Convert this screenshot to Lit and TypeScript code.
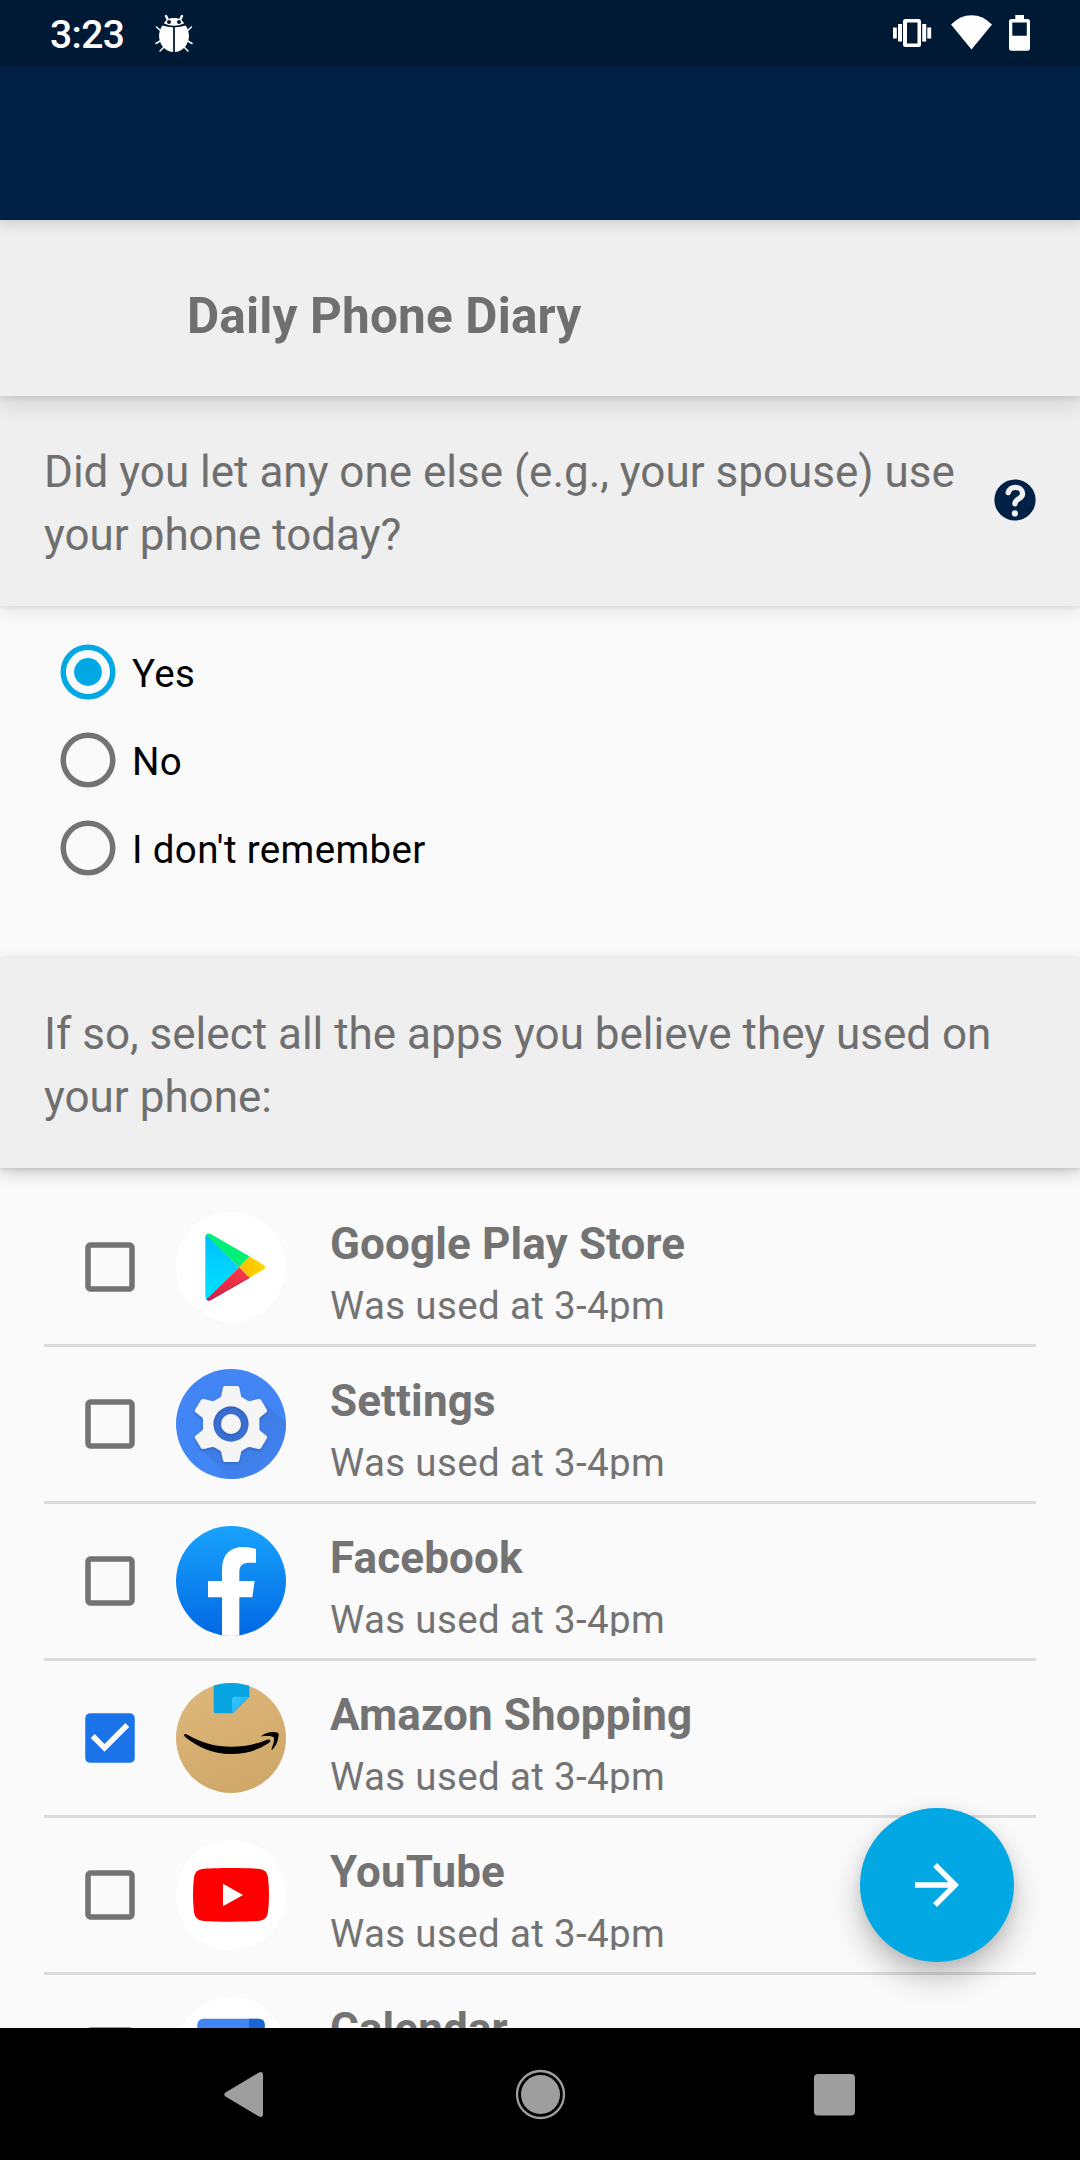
import { LitElement, html, css, svg, nothing, type TemplateResult } from "lit";
import { customElement, property } from "lit/decorators.js";
import { classMap } from "lit/directives/class-map.js";

interface AppEntry {
  name: string;
  usage: string;
  icon: string;
  checked: boolean;
}

const USED = "Was used at 3-4pm";

const APPS: AppEntry[] = [
  { name: "Google Play Store", usage: USED, icon: "play", checked: false },
  { name: "Settings", usage: USED, icon: "settings", checked: false },
  { name: "Facebook", usage: USED, icon: "facebook", checked: false },
  { name: "Amazon Shopping", usage: USED, icon: "amazon", checked: true },
  { name: "YouTube", usage: USED, icon: "youtube", checked: false },
  { name: "Calendar", usage: USED, icon: "calendar", checked: false },
];

const CHOICES = [
  { label: "Yes", selected: true },
  { label: "No", selected: false },
  { label: "I don't remember", selected: false },
];

/* Launcher icons share a 330-unit canvas clipped to a circle. */
const ICONS: Record<string, TemplateResult> = {
  play: svg`
    <defs>
      <linearGradient id="pb" x1="0" y1="0" x2="0" y2="1"><stop offset="0" stop-color="#00c0ff"/><stop offset="1" stop-color="#00e4ff"/></linearGradient>
      <linearGradient id="pr" x1="1" y1="0" x2="0" y2="1"><stop offset="0" stop-color="#ff3a44"/><stop offset="1" stop-color="#d0204e"/></linearGradient>
      <linearGradient id="py" x1="0" y1="0" x2="1" y2="0"><stop offset="0" stop-color="#ffbd00"/><stop offset="1" stop-color="#ffd900"/></linearGradient>
    </defs>
    <rect width="330" height="330" fill="#fff"/>
    <path d="M92 67L190 166L92 262Q88 260 88 255V74Q88 69 92 67Z" fill="url(#pb)"/>
    <path d="M91 68Q95 62 104 66L220 133L190 166Z" fill="#00f076"/>
    <path d="M220 133L262 158Q273 166 262 173L220 197L190 166Z" fill="url(#py)"/>
    <path d="M190 166L220 197L104 264Q95 268 91 262Z" fill="url(#pr)"/>
    <path d="M220 195L104 262Q95 266 90 261Q95 269 104 265L220 198Z" fill="#b81f40"/>`,
  settings: svg`
    <defs>
      <linearGradient id="sl" x1="0" y1="0" x2="1" y2="1"><stop offset="0.4" stop-color="#3d78de"/><stop offset="1" stop-color="#4285f4"/></linearGradient>
      <filter id="sf" x="-20%" y="-20%" width="140%" height="140%"><feDropShadow dx="0" dy="4" stdDeviation="5" flood-color="#1d479c" flood-opacity="0.45"/></filter>
    </defs>
    <rect width="330" height="330" fill="#4285f4"/>
    <path d="M273 108L340 170V340H176L60 225Z" fill="url(#sl)" opacity="0.7"/>
    <circle cx="165" cy="165" r="60" fill="#3a6fd0"/>
    <g filter="url(#sf)">
      <path fill="#f5f5f5" fill-rule="evenodd" d="M146 51H184Q189 51 190 56L195 80Q196 84 200 86L215 95Q219 97 223 96L247 90Q252 89 255 93L273 123Q275 127 271 130L253 144Q250 147 250 151V179Q250 183 253 186L271 200Q275 203 273 207L255 237Q252 241 247 240L223 234Q219 233 215 235L200 244Q196 246 195 250L190 274Q189 279 184 279H146Q142 279 141 274L136 250Q135 246 131 244L115 235Q111 233 107 234L83 240Q78 241 75 237L57 207Q55 203 59 200L77 186Q81 183 81 179V151Q81 147 77 144L59 130Q55 127 57 123L75 93Q78 89 83 90L107 96Q111 97 115 95L131 86Q135 84 136 80L141 56Q142 51 146 51ZM165 112A53 53 0 1 0 165 218A53 53 0 1 0 165 112Z"/>
      <circle cx="165" cy="165" r="30" fill="#f5f5f5"/>
    </g>`,
  facebook: svg`
    <defs><linearGradient id="fb" x1="0" y1="0" x2="0" y2="1"><stop offset="0" stop-color="#18a3fc"/><stop offset="1" stop-color="#0268e4"/></linearGradient></defs>
    <rect width="330" height="330" fill="url(#fb)"/>
    <path fill="#fff" d="M138 330V214H96V165H138V130C138 86 162 63 202 63Q220 63 240 69V110H220C200 110 190 119 190 138V165H236L229 214H190V330Z"/>`,
  amazon: svg`
    <defs>
      <linearGradient id="am" x1="0" y1="0" x2="0.4" y2="1"><stop offset="0" stop-color="#dfb87c"/><stop offset="1" stop-color="#d0a869"/></linearGradient>
      <linearGradient id="at" x1="0" y1="0" x2="1" y2="1"><stop offset="0" stop-color="#38c6ff"/><stop offset="0.6" stop-color="#26b6ee"/></linearGradient>
    </defs>
    <rect width="330" height="330" fill="url(#am)"/>
    <path d="M113 0H220V41L171 91H121Q113 91 113 83Z" fill="#06a5e1"/>
    <path d="M176 41H220L171 91Q168 91 168 87V49Q168 41 176 41Z" fill="url(#at)"/>
    <path d="M24 156Q26 151 34 155C80 180 120 191 165 191C205 191 240 184 273 170Q281 168 283 173Q283 177 277 181C246 202 207 213 165 213C110 213 64 192 27 161Q24 158 24 156Z"/>
    <path d="M256 159C270 147 292 145 305 149Q309 151 308 157C306 176 300 190 289 200Q285 201 287 196C292 184 296 170 293 163C287 158 270 158 258 160Q255 161 256 159Z"/>`,
  youtube: svg`
    <rect width="330" height="330" fill="#fff"/>
    <path fill="#f00" d="M165 84C205 84 235 85 252 87Q273 90 276 112C280 147 280 182 276 217Q273 239 252 242C235 244 205 245 165 245C125 245 95 244 78 242Q57 239 54 217C50 182 50 147 54 112Q57 90 78 87C95 85 125 84 165 84Z"/>
    <path fill="#fff" d="M141 131L201 165L141 199Z"/>`,
  calendar: svg`
    <rect width="330" height="330" fill="#fff"/>
    <rect x="64" y="65" width="202" height="200" rx="18" fill="#4285f4"/>
    <path d="M219 65H248Q266 65 266 83V120H219Z" fill="#1967d2"/>
    <rect x="110" y="112" width="109" height="109" fill="#fff"/>`,
};

@customElement("app-row")
class AppRow extends LitElement {
  static styles = css`
    :host { display: block; }
    .row {
      display: flex; align-items: flex-start;
      height: 110px; padding: 22px 0 22px 33px;
      border-bottom: 3px solid #dcdcdc;
    }
    .check { width: 66px; height: 66px; flex: none; margin-top: 22px; fill: #737373; }
    .check.on { fill: #1a73e8; }
    .icon { width: 110px; height: 110px; flex: none; margin-left: 33px; border-radius: 50%; overflow: hidden; display: block; }
    .text { flex: 1; height: 110px; margin-left: 44px; overflow: hidden; color: #737373; white-space: nowrap; }
    .name { font-size: 44px; line-height: 52px; font-weight: 700; padding-top: 6px; letter-spacing: 0.12px; }
    .usage { font-size: 38.5px; line-height: 46px; padding-top: 13px; letter-spacing: 0.36px; }
  `;

  @property({ attribute: false }) entry!: AppEntry;

  render() {
    const { name, usage, icon, checked } = this.entry;
    return html`<div class="row">
      <svg class=${classMap({ check: true, on: checked })} viewBox="0 0 24 24">
        ${checked
          ? svg`<path d="M5 3H19Q21 3 21 5V19Q21 21 19 21H5Q3 21 3 19V5Q3 3 5 3ZM10 17L19 8L17.59 6.58L10 14.17L6.41 10.59L5 12Z" fill-rule="evenodd"/>`
          : svg`<path d="M19 5v14H5V5h14m0-2H5c-1.1 0-2 .9-2 2v14c0 1.1.9 2 2 2h14c1.1 0 2-.9 2-2V5c0-1.1-.9-2-2-2z"/>`}
      </svg>
      <svg class="icon" viewBox="0 0 330 330">${ICONS[icon]}</svg>
      <div class="text">
        <div class="name">${name}</div>
        <div class="usage">${usage}</div>
      </div>
    </div>`;
  }
}

@customElement("app-root")
class AppRoot extends LitElement {
  static styles = css`
    :host {
      display: flex; flex-direction: column; position: relative;
      width: 1080px; height: 2160px; overflow: hidden;
      background: #fafafa; font-family: Roboto, "Liberation Sans", sans-serif;
    }
    .status {
      flex: none; height: 66px; box-sizing: border-box; background: #001a35; color: #fff;
      display: flex; align-items: center; padding: 0 48px 0 50px;
    }
    .time { font-size: 39px; font-weight: 500; line-height: 66px; padding-top: 3px; width: 104px; letter-spacing: -0.6px; }
    .bug { width: 40px; height: 66px; }
    .sys { width: 144px; height: 66px; margin-left: auto; }
    .toolbar { flex: none; height: 154px; background: #002045; position: relative; z-index: 4; box-shadow: 0 3px 14px rgba(0,0,0,0.16); }
    .title {
      flex: none; height: 176px; box-sizing: border-box; padding: 66px 0 0 187px;
      background: #efefef; color: #6f6f6f; position: relative; z-index: 3;
      font-size: 49.5px; line-height: 60px; font-weight: 700; letter-spacing: 0.16px;
      box-shadow: 0 8px 22px rgba(0,0,0,0.13), 0 2px 6px rgba(0,0,0,0.09);
    }
    .question {
      flex: none; height: 210px; box-sizing: border-box; padding: 45px 44px 0;
      background: #efefef; color: #6f6f6f; position: relative; z-index: 2;
      display: flex; justify-content: space-between;
      font-size: 44px; line-height: 63px;
      box-shadow: 0 4px 16px rgba(0,0,0,0.11), 0 1px 4px rgba(0,0,0,0.08);
    }
    .question.second { box-shadow: 0 5px 16px rgba(0,0,0,0.18), 0 2px 5px rgba(0,0,0,0.1); }
    .question p { margin: 0; white-space: pre-line; }
    .help { width: 42px; height: 42px; flex: none; margin-top: 38px; }
    .choices { flex: none; height: 352px; box-sizing: border-box; padding: 22px 0 0 55px; }
    .choice { display: flex; align-items: center; height: 88px; gap: 11px; font-size: 38.5px; letter-spacing: 0.36px; color: #000; }
    .choice span { padding-top: 3px; }
    .radio { width: 66px; height: 66px; fill: none; stroke: #737373; stroke-width: 5.5; }
    .radio.on { stroke: #02a8e3; }
    .dot { fill: #02a8e3; stroke: none; }
    .list { flex: 1; min-height: 0; overflow: hidden; padding: 22px 44px 0; }
    .nav { flex: none; height: 132px; background: #000; position: relative; z-index: 5; }
    .nav svg { display: block; width: 1080px; height: 132px; fill: #9e9e9e; }
    .fab {
      position: absolute; right: 66px; bottom: 198px; width: 154px; height: 154px; border-radius: 50%;
      background: #02a8e3; display: flex; align-items: center; justify-content: center;
      box-shadow: 0 16px 30px rgba(0,0,0,0.24), 0 2px 12px rgba(0,0,0,0.08);
    }
    .fab svg { width: 66px; height: 66px; fill: #fff; }
  `;

  render() {
    return html`
      <div class="status">
        <div class="time">3:23</div>
        <svg class="bug" viewBox="154 0 40 66">
          <g stroke="#fff" stroke-width="1.5" fill="none" stroke-linecap="round">
            <path d="M156.5 27L161 31M156 43.5L161 40.5M160 51L164 47M191.5 27L187 31M192 43.5L187 40.5M188 51L184 47"/>
            <path d="M166 16L168 20M182 16L180 20" stroke-width="2.4"/>
          </g>
          <path fill="#fff" d="M164 23.5C166 16 182 16 184 23.5Q174 28 164 23.5Z"/>
          <path fill="#fff" d="M162.500 25.500Q168 27.500 173.100 27.300V52C164 51.500 159 43 159 35.500Q159.500 29 162.500 25.500ZM185.500 25.500Q180 27.500 174.900 27.300V52C184 51.500 189 43 189 35.500Q188.500 29 185.500 25.500Z"/>
          <circle cx="169" cy="22" r="2" fill="#001a35"/><circle cx="179" cy="22" r="2" fill="#001a35"/>
        </svg>
        <svg class="sys" viewBox="888 0 144 66" fill="#fff">
          <path fill-rule="evenodd" d="M905.500 19H918.500Q921 19 921 21.500V44.500Q921 47 918.500 47H905.500Q903 47 903 44.500V21.500Q903 19 905.500 19ZM907 22.500V43.500H917.500V22.500Z"/>
          <path d="M898 24H902V41.500H898ZM893 27.500H896.800V38.500H893ZM922.200 24H926.200V41.500H922.200ZM927.300 27.500H931.200V38.500H927.300Z"/>
          <path d="M951 24.500Q960 15.200 971.500 15.200T992 24.500L971.500 49.500Z"/>
          <path fill-rule="evenodd" d="M1015.300 15H1024V19H1027.500Q1030 19 1030 21.500V48.500Q1030 50.800 1027.500 50.800H1011.500Q1009 50.800 1009 48.500V21.500Q1009 19 1011.500 19H1015.300ZM1012.300 22.500V35.800H1026.800V22.500Z"/>
        </svg>
      </div>
      <div class="toolbar"></div>
      <div class="title">Daily Phone Diary</div>
      <div class="question">
        <p>${"Did you let any one else (e.g., your spouse) use\nyour phone today?"}</p>
        <svg class="help" viewBox="0 0 42 42">
          <circle cx="21" cy="21" r="20.600" fill="#002045"/>
          <path d="M14.200 13.600C15.500 9.500 18 8.300 21.300 8.300C25.800 8.300 28.600 11 28.600 14.800C28.600 20.200 21.200 19.400 20.900 24.800" fill="none" stroke="#efefef" stroke-width="5.300" stroke-linecap="round"/>
          <circle cx="20.900" cy="34.400" r="3.100" fill="#efefef"/>
        </svg>
      </div>
      <div class="choices">
        ${CHOICES.map(
          (c) => html`<div class="choice">
            <svg class=${classMap({ radio: true, on: c.selected })} viewBox="0 0 66 66">
              <circle cx="33" cy="33" r="24.750"/>
              ${c.selected ? svg`<circle class="dot" cx="33" cy="33" r="13.900"/>` : nothing}
            </svg>
            <span>${c.label}</span>
          </div>`
        )}
      </div>
      <div class="question second">
        <p>${"If so, select all the apps you believe they used on\nyour phone:"}</p>
      </div>
      <div class="list">${APPS.map((a) => html`<app-row .entry=${a}></app-row>`)}</div>
      <div class="fab"><svg viewBox="0 0 24 24"><path d="M12 4l-1.410 1.410L16.170 11H4v2h12.170l-5.580 5.590L12 20l8-8z"/></svg></div>
      <div class="nav">
        <svg viewBox="0 2028 1080 132">
          <path d="M225.500 2092.500L259 2072.500Q263 2071 263 2075V2114Q263 2118 259 2116.500L225.500 2096.500Q223 2094.500 225.500 2092.500Z"/>
          <circle cx="540.500" cy="2094.500" r="19.500"/>
          <circle cx="540.500" cy="2094.500" r="23.500" fill="none" stroke="#9e9e9e" stroke-width="2.300"/>
          <rect x="814" y="2074" width="41" height="41.500" rx="4"/>
        </svg>
      </div>
    `;
  }
}
